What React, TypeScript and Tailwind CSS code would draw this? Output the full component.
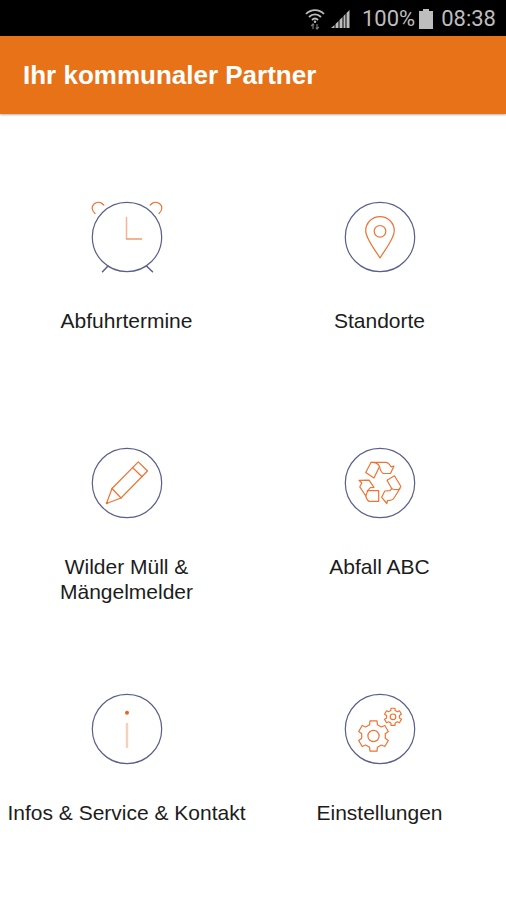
import React from 'react';

interface Tile {
  label: string;
  href: string;
  icon: React.ReactNode;
}

const ORANGE = '#ec7434';
const NAVY = '#5a5f8c';

// outline of a six-toothed cog
function gearPath(cx: number, cy: number, outer: number, inner: number) {
  const points: string[] = [];
  for (let i = 0; i < 6; i++) {
    const steps: [number, number][] = [
      [-19, inner],
      [-13, outer],
      [13, outer],
      [19, inner],
    ];
    steps.forEach(([offset, r]) => {
      const a = ((i * 60 + offset - 90) * Math.PI) / 180;
      points.push(`${(cx + r * Math.cos(a)).toFixed(2)} ${(cy + r * Math.sin(a)).toFixed(2)}`);
    });
  }
  return `M${points.join('L')}Z`;
}

function RoundIcon({ children }: { children: React.ReactNode }) {
  return (
    <svg
      viewBox="0.5 0 76 76"
      className="w-[76px] h-[76px]"
      fill="none"
      stroke={ORANGE}
      strokeWidth="1.2"
      strokeLinejoin="round"
      strokeLinecap="round"
      aria-hidden="true"
    >
      <circle cx="38.5" cy="38" r="34.7" stroke={NAVY} />
      {children}
    </svg>
  );
}

const tiles: Tile[] = [
  {
    label: 'Abfuhrtermine',
    href: '#abfuhrtermine',
    icon: (
      <RoundIcon>
        <path d="M6.5 14.5C3 11.5 2.8 7.5 5.5 5C8.5 2.4 12.5 3 15.3 6" />
        <path d="M70.5 14.5C74 11.5 74.2 7.5 71.5 5C68.5 2.4 64.5 3 61.7 6" />
        <path d="M38 18.5V39.5" stroke="#f6b595" strokeWidth="1.5" />
        <path d="M38 40H53" stroke="#f09a6c" strokeWidth="1.5" />
        <path d="M19.5 67L14 72.8M58 67L64 72.8" stroke={NAVY} strokeWidth="1.5" />
      </RoundIcon>
    ),
  },
  {
    label: 'Standorte',
    href: '#standorte',
    icon: (
      <RoundIcon>
        <path d="M38.5 59C35 53 24.2 39.5 24.2 31.9A14.3 14.3 0 0 1 52.8 31.9C52.8 39.5 42 53 38.5 59Z" />
        <circle cx="38.5" cy="32.3" r="5.8" />
      </RoundIcon>
    ),
  },
  {
    label: 'Wilder Müll & Mängelmelder',
    href: '#maengelmelder',
    icon: (
      <RoundIcon>
        <path d="M18 58.5L23.5 43.5L49.8 16.8L59 26L32.5 53Z" />
        <path d="M23.5 43.5L32.5 53M44 22.5L53.5 31.8" />
        <circle cx="18.5" cy="58" r="0.7" />
      </RoundIcon>
    ),
  },
  {
    label: 'Abfall ABC',
    href: '#abfall-abc',
    icon: (
      <RoundIcon>
        <path d="M29.5 17.5L24.2 27.5L32.5 33L38 21.5C36.5 18 32 16.8 29.5 17.5Z" />
        <path d="M29.5 17.3H44C47 17.3 48.3 19.5 49.5 21.8L52.5 21L49 28.5L41.5 28.3C39.5 27 38.5 24 38 21.5" />
        <path d="M17.5 35.3L27.5 35.2L32.5 42.3L28.8 42.6C26.5 44.5 25.2 48 24.3 51L18.3 41.8L20.3 38Z" />
        <path d="M25.8 45.7L37.2 45.5V56.3H28C26 56.3 25 53.5 24.3 51" />
        <path d="M53 30.8L45.5 35.2L50.3 43.7C53 44.8 55.5 44.8 57.3 44.5L59.4 41.5Z" />
        <path d="M50.3 43.7L48.5 45.6L43.3 46L40.2 52.3L45.3 58.5L46 55.5C49 55.5 51.5 54.8 52.5 53L58.5 43.5" />
      </RoundIcon>
    ),
  },
  {
    label: 'Infos & Service & Kontakt',
    href: '#infos',
    icon: (
      <RoundIcon>
        <circle cx="38.5" cy="21.8" r="2" fill="#e8651c" stroke="none" />
        <path d="M38.5 32V57" stroke="#f7cfc0" strokeWidth="2.5" strokeLinecap="butt" />
      </RoundIcon>
    ),
  },
  {
    label: 'Einstellungen',
    href: '#einstellungen',
    icon: (
      <RoundIcon>
        <path d={gearPath(32, 45, 15.5, 12)} />
        <circle cx="32" cy="45" r="5.6" />
        <path d={gearPath(51.5, 25.8, 8.8, 6.6)} />
        <circle cx="51.5" cy="25.8" r="2.8" />
      </RoundIcon>
    ),
  },
];

function StatusBar() {
  return (
    <div className="h-9 bg-black text-[#bdbdbd] flex items-center justify-end pt-0.5 pr-2.5 font-['Roboto',sans-serif] text-[22px] leading-8">
      <svg viewBox="0 0 20 22" className="w-5 h-[22px]" fill="none" stroke="currentColor" strokeWidth="1.8" aria-hidden="true">
        <path d="M1 6C6 0.8 14 0.8 19 6M4 9C7.5 5.5 12.5 5.5 16 9M7 12C9 10 11 10 13 12" />
        <circle cx="10" cy="13.8" r="1.2" fill="currentColor" stroke="none" />
        <path d="M8 21V16M6.2 18L8 16L9 17.3M12 16V21M10.8 19.5L12 21L13.8 19" stroke="#777" strokeWidth="1.2" />
      </svg>
      <svg viewBox="0 0 19 20" className="w-[19px] h-5 ml-1.5" fill="currentColor" aria-hidden="true">
        <path d="M0 19L3.5 16V19ZM4.5 15L7.5 12V19H4.5ZM8.5 11L11.5 8V19H8.5ZM12.5 7L14.5 5V19H12.5ZM15.5 4L18.5 1V19H15.5Z" />
      </svg>
      <span className="ml-3">100%</span>
      <svg viewBox="0 0 14 20" className="w-3.5 h-5 ml-1" fill="currentColor" aria-hidden="true">
        <path d="M4 0H10V2H14V20H0V2H4Z" />
      </svg>
      <span className="ml-2">08:38</span>
    </div>
  );
}

export default function App() {
  return (
    <div className="min-h-screen bg-white font-['Liberation_Sans',Arial,sans-serif]">
      <StatusBar />
      <header className="h-[78px] bg-[#e87218] px-[23px] flex items-center shadow-[0_1px_2px_rgba(0,0,0,0.3)]">
        <h1 className="text-[26px] leading-8 font-bold text-white">Ihr kommunaler Partner</h1>
      </header>
      <nav className="grid grid-cols-2 auto-rows-[246px] pt-[85px]">
        {tiles.map((tile) => (
          <a key={tile.href} href={tile.href} className="flex flex-col items-center text-center text-[#1c1c1c]">
            {tile.icon}
            <span className="mt-[33px] text-[21px] leading-[25px]">{tile.label}</span>
          </a>
        ))}
      </nav>
    </div>
  );
}
